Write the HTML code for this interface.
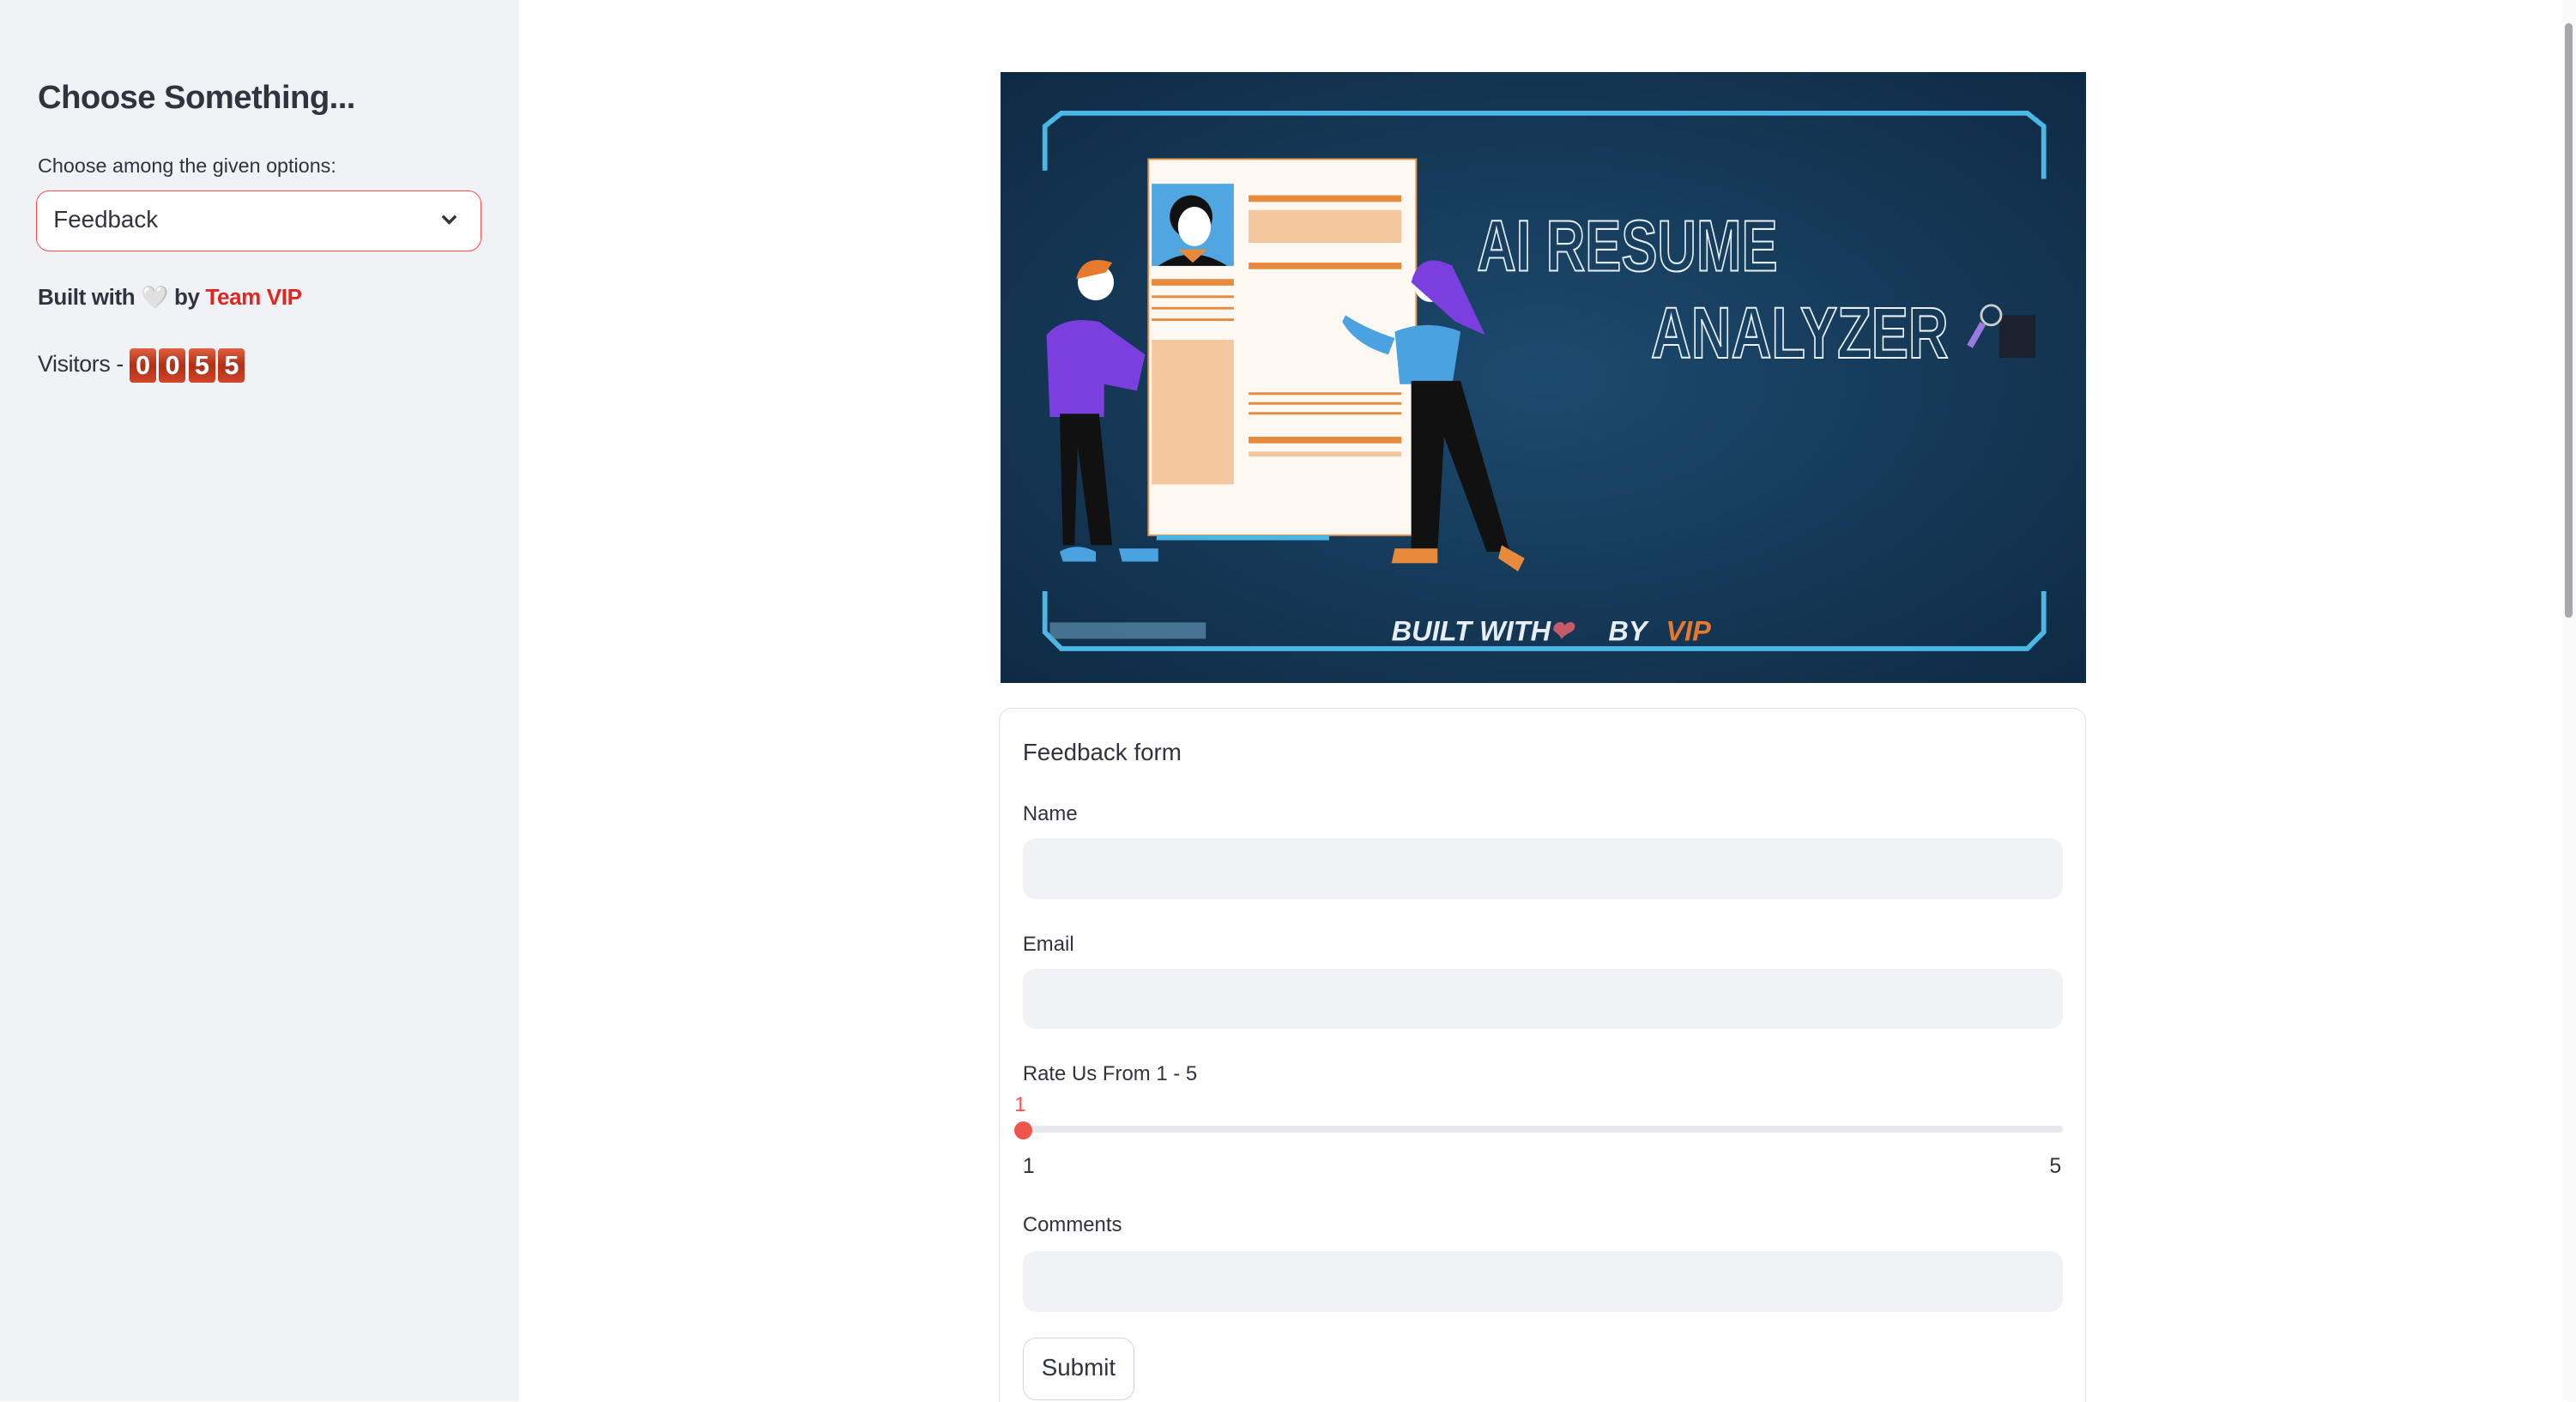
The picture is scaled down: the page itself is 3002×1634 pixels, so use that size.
<!DOCTYPE html>
<html><head><meta charset="utf-8">
<style>
html,body{margin:0;padding:0;background:#fff;overflow:hidden}
#w{zoom:1.9145;width:1568px;height:853px;position:relative;font-family:"Liberation Sans",sans-serif;color:#31333f}
#side{position:absolute;left:0;top:0;width:316px;height:853px;background:#f0f2f6}
h1{position:absolute;left:23px;top:48px;margin:0;font-size:20px;font-weight:bold;letter-spacing:-0.3px}
.lbl{position:absolute;font-size:12.2px;color:#31333f}
#sel{position:absolute;left:22px;top:116px;width:271px;height:37px;border:1px solid #ff4b4b;border-radius:8px;background:#fff;box-sizing:border-box}
#sel span{position:absolute;left:10px;top:9px;font-size:14.5px}
#built{position:absolute;left:23px;top:173px;font-size:13.6px;font-weight:bold;letter-spacing:-0.2px}
#vis{position:absolute;left:23px;top:212px;font-size:14px;letter-spacing:-0.2px}
.d{display:inline-block;width:16px;height:21px;background:linear-gradient(#e06040,#b52d12 50%,#d2462a);color:#fff;font-weight:bold;font-size:16px;text-align:center;line-height:21px;border-radius:2px;margin-right:2px;vertical-align:middle;text-shadow:0 0 1px #666}
#ban{position:absolute;left:609px;top:44px;width:661px;height:372px}
#form{position:absolute;left:608px;top:431px;width:662px;height:440px;border:1px solid #e0e1e6;border-radius:8px;box-sizing:border-box}
.in{position:absolute;left:14px;width:633px;height:37px;background:#f0f2f6;border-radius:8px}
.fl{position:absolute;left:14px;font-size:12.5px}
#sb{position:absolute;right:0;top:0;width:8px;height:853px;background:#fafafa}
#sb div{position:absolute;left:1px;top:14px;width:5px;height:362px;background:#a8a8ad;border-radius:3px}
</style></head><body><div id="w">
<div id="side">
<h1>Choose Something...</h1>
<div class="lbl" style="left:23px;top:94px">Choose among the given options:</div>
<div id="sel"><span>Feedback</span>
<svg style="position:absolute;right:13px;top:12px" width="12" height="10" viewBox="0 0 12 10"><path d="M2 3l4 4 4-4" stroke="#31333f" stroke-width="1.8" fill="none"/></svg></div>
<div id="built">Built with <span style="color:#ddd">🤍</span> by <span style="color:#e0261f">Team VIP</span></div>
<div id="vis">Visitors - <span class="d">0</span><span class="d">0</span><span class="d">5</span><span class="d">5</span></div>
</div>
<svg id="ban" viewBox="0 0 661 372">
<defs><radialGradient id="g" cx="0.5" cy="0.5" r="0.7"><stop offset="0" stop-color="#1c4a6e"/><stop offset="1" stop-color="#0f2a44"/></radialGradient></defs>
<rect width="661" height="372" fill="url(#g)"/>
<path d="M27 60V33l10-8h588l10 8v32M27 316v25l10 10h588l10-10v-25" stroke="#4ab8e6" stroke-width="3" fill="none"/>
<rect x="30" y="335" width="95" height="10" fill="#6aa0c0" opacity=".6"/>
<rect x="90" y="53" width="163" height="229" fill="#fdf8f2" stroke="#e6924a"/>
<rect x="92" y="68" width="50" height="50" fill="#4fa6e0"/>
<circle cx="116" cy="88" r="13" fill="#111"/><ellipse cx="118" cy="94" rx="10" ry="12" fill="#fff"/>
<path d="M96 118q20-14 42 0z" fill="#111"/><path d="M108 108h18l-9 8z" fill="#e78a3c"/>
<rect x="151" y="75" width="93" height="4" fill="#e78a3c"/><rect x="151" y="84" width="93" height="20" fill="#f5c79f"/>
<rect x="151" y="116" width="93" height="4" fill="#e78a3c"/>
<rect x="92" y="126" width="50" height="4" fill="#e78a3c"/>
<g fill="#e78a3c"><rect x="92" y="136" width="50" height="1.5"/><rect x="92" y="143" width="50" height="1.5"/><rect x="92" y="150" width="50" height="1.5"/></g>
<rect x="92" y="163" width="50" height="88" fill="#f5c79f"/>
<g fill="#e78a3c"><rect x="151" y="195" width="93" height="1.5"/><rect x="151" y="201" width="93" height="1.5"/><rect x="151" y="207" width="93" height="1.5"/><rect x="151" y="222" width="93" height="4"/><rect x="151" y="231" width="93" height="3" fill="#f5c79f"/></g>
<rect x="95" y="282" width="105" height="3" fill="#4ab8e6"/>
<path d="M28 160q10-12 32-8l28 20-5 22-20-4v20H30z" fill="#7b3fe0"/>
<path d="M36 208h24l8 80H55l-8-60-2 60H38z" fill="#111"/>
<circle cx="58" cy="128" r="11" fill="#fff"/><path d="M46 126q4-16 22-10l-4 6z" fill="#e87a2c"/>
<path d="M36 292q10-6 22 0v6H38zM72 290h24v8H74z" fill="#4aa3e0"/>
<path d="M240 158q20-8 40 0l-5 32h-32zM210 148q12 8 30 14l-4 10q-20-6-28-20z" fill="#4aa3e0"/>
<path d="M250 188h30l30 104h-14l-26-70-4 70h-16z" fill="#111"/>
<circle cx="262" cy="130" r="10" fill="#fff"/><path d="M250 128q5-20 25-10l20 42-18-8z" fill="#7b3fe0"/>
<path d="M240 290h26v9h-28zM305 288l14 8-4 8-12-8z" fill="#e78a3c"/>
<g font-family="Liberation Sans,sans-serif" font-weight="bold" fill="none" stroke="#e8f0f6" stroke-width="1.1" font-size="44">
<text x="290" y="121" textLength="183" lengthAdjust="spacingAndGlyphs">AI RESUME</text>
<text x="396" y="174" textLength="181" lengthAdjust="spacingAndGlyphs">ANALYZER</text></g>
<rect x="608" y="148" width="22" height="26" fill="#1a2230"/><circle cx="603" cy="148" r="6" fill="none" stroke="#ccc" stroke-width="1.5"/><path d="M598 153l-8 14" stroke="#9a7ae0" stroke-width="4"/>
<g font-family="Liberation Sans,sans-serif" font-weight="bold" font-style="italic" font-size="17">
<text x="238" y="346" fill="#e6eef4">BUILT WITH</text><text x="334" y="346" fill="#c65a6a">❤</text>
<text x="370" y="346" fill="#e6eef4">BY</text><text x="405" y="346" fill="#e8782c">VIP</text></g>
</svg>
<div id="form">
<div class="fl" style="top:18px;font-size:14.5px">Feedback form</div>
<div class="fl" style="top:57px">Name</div><div class="in" style="top:79px"></div>
<div class="fl" style="top:136px">Email</div><div class="in" style="top:158px"></div>
<div class="fl" style="top:215px">Rate Us From 1 - 5</div>
<div class="fl" style="top:234px;left:9px;color:#ff4b4b">1</div>
<div style="position:absolute;left:14px;top:254px;width:633px;height:4px;background:#e6e8ee;border-radius:2px"></div>
<div style="position:absolute;left:9px;top:251px;width:11px;height:11px;border-radius:50%;background:#f0554d"></div>
<div class="fl" style="top:271px;font-size:13px">1</div><div class="fl" style="top:271px;left:639px;font-size:13px">5</div>
<div class="fl" style="top:307px">Comments</div><div class="in" style="top:330px"></div>
<div style="position:absolute;left:14px;top:383px;width:68px;height:38px;border:1px solid #d6d6d9;border-radius:8px;box-sizing:border-box;font-size:14.5px;text-align:center;line-height:36px">Submit</div>
</div>
<div id="sb"><div></div></div>
</div></body></html>
